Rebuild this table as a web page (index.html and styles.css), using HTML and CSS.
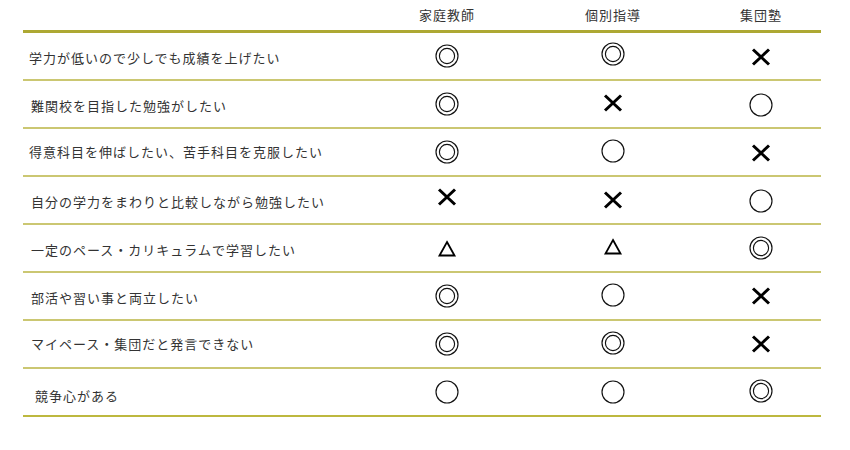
FILE: index.html
```html
<!DOCTYPE html>
<html lang="ja">
<head>
<meta charset="utf-8">
<link rel="stylesheet" href="styles.css">
</head>
<body>
<svg class="defs" width="0" height="0" aria-hidden="true">
  <symbol id="dbl" viewBox="0 0 24 24"><circle cx="12" cy="12" r="11" fill="none" stroke="#111" stroke-width="1.15"/><circle cx="12" cy="12" r="7.6" fill="none" stroke="#111" stroke-width="1.15"/></symbol>
  <symbol id="circ" viewBox="0 0 24 24"><circle cx="12" cy="12" r="11" fill="none" stroke="#111" stroke-width="1.15"/></symbol>
  <symbol id="cross" viewBox="0 0 24 24"><path d="M4 4.5 L20 19.5 M20 4.5 L4 19.5" fill="none" stroke="#000" stroke-width="3"/></symbol>
  <symbol id="tri" viewBox="0 0 24 24"><path d="M12 5 L19.5 18.5 H4.5 Z" fill="none" stroke="#000" stroke-width="1.8" stroke-linejoin="miter"/></symbol>
</svg>
<div class="table">
  <div class="row head">
    <div class="cell label"></div>
    <div class="cell">家庭教師</div>
    <div class="cell">個別指導</div>
    <div class="cell">集団塾</div>
  </div>
  <div class="row">
    <div class="cell label">学力が低いので少しでも成績を上げたい</div>
    <div class="cell"><svg class="mk"><use href="#dbl"/></svg></div>
    <div class="cell up2"><svg class="mk"><use href="#dbl"/></svg></div>
    <div class="cell dn1"><svg class="mk"><use href="#cross"/></svg></div>
  </div>
  <div class="row">
    <div class="cell label in">難関校を目指した勉強がしたい</div>
    <div class="cell"><svg class="mk"><use href="#dbl"/></svg></div>
    <div class="cell up1"><svg class="mk"><use href="#cross"/></svg></div>
    <div class="cell dn1"><svg class="mk"><use href="#circ"/></svg></div>
  </div>
  <div class="row">
    <div class="cell label tup">得意科目を伸ばしたい、苦手科目を克服したい</div>
    <div class="cell"><svg class="mk"><use href="#dbl"/></svg></div>
    <div class="cell up1"><svg class="mk"><use href="#circ"/></svg></div>
    <div class="cell dn1"><svg class="mk"><use href="#cross"/></svg></div>
  </div>
  <div class="row">
    <div class="cell label in">自分の学力をまわりと比較しながら勉強したい</div>
    <div class="cell up3"><svg class="mk"><use href="#cross"/></svg></div>
    <div class="cell"><svg class="mk"><use href="#cross"/></svg></div>
    <div class="cell dn1"><svg class="mk"><use href="#circ"/></svg></div>
  </div>
  <div class="row">
    <div class="cell label in">一定のペース・カリキュラムで学習したい</div>
    <div class="cell dn1"><svg class="mk"><use href="#tri"/></svg></div>
    <div class="cell up1"><svg class="mk"><use href="#tri"/></svg></div>
    <div class="cell"><svg class="mk"><use href="#dbl"/></svg></div>
  </div>
  <div class="row">
    <div class="cell label in">部活や習い事と両立したい</div>
    <div class="cell"><svg class="mk"><use href="#dbl"/></svg></div>
    <div class="cell up1"><svg class="mk"><use href="#circ"/></svg></div>
    <div class="cell"><svg class="mk"><use href="#cross"/></svg></div>
  </div>
  <div class="row">
    <div class="cell label in tup">マイペース・集団だと発言できない</div>
    <div class="cell"><svg class="mk"><use href="#dbl"/></svg></div>
    <div class="cell up1"><svg class="mk"><use href="#dbl"/></svg></div>
    <div class="cell"><svg class="mk"><use href="#cross"/></svg></div>
  </div>
  <div class="row last">
    <div class="cell label in2">競争心がある</div>
    <div class="cell"><svg class="mk"><use href="#circ"/></svg></div>
    <div class="cell"><svg class="mk"><use href="#circ"/></svg></div>
    <div class="cell up1"><svg class="mk"><use href="#dbl"/></svg></div>
  </div>
</div>
</body>
</html>
```
FILE: styles.css
```css
html, body {
  margin: 0;
  padding: 0;
  background: #fff;
}
body {
  font-family: "Noto Sans CJK JP", "Noto Sans", sans-serif;
  color: #333;
  font-size: 13px;
  letter-spacing: 1px;
}
.defs {
  position: absolute;
  width: 0;
  height: 0;
  overflow: hidden;
}
.table {
  width: 798px;
  margin-left: 23px;
}
.row {
  display: grid;
  grid-template-columns: 346px 156px 176px 120px;
  height: 46px;
  border-bottom: 2px solid #cbc772;
}
.row.head {
  height: 30px;
  border-bottom: 3px solid #ada833;
}
.row.last {
  border-bottom-color: #bdb83f;
}
.cell {
  display: flex;
  align-items: center;
  justify-content: center;
  line-height: 1;
}
.head .cell {
  padding-bottom: 2px;
}
.cell.label {
  justify-content: flex-start;
  padding-left: 6px;
  padding-top: 2px;
}
.cell.label.in {
  padding-left: 8px;
}
.cell.label.tup {
  padding-top: 0;
  padding-bottom: 2px;
}
.cell.label.in2 {
  padding-left: 12px;
  padding-top: 6px;
}
.mk {
  width: 24px;
  height: 24px;
  display: block;
}
.up1 { padding-bottom: 2px; }
.up2 { padding-bottom: 4px; }
.up3 { padding-bottom: 6px; }
.dn1 { padding-top: 2px; }
```
